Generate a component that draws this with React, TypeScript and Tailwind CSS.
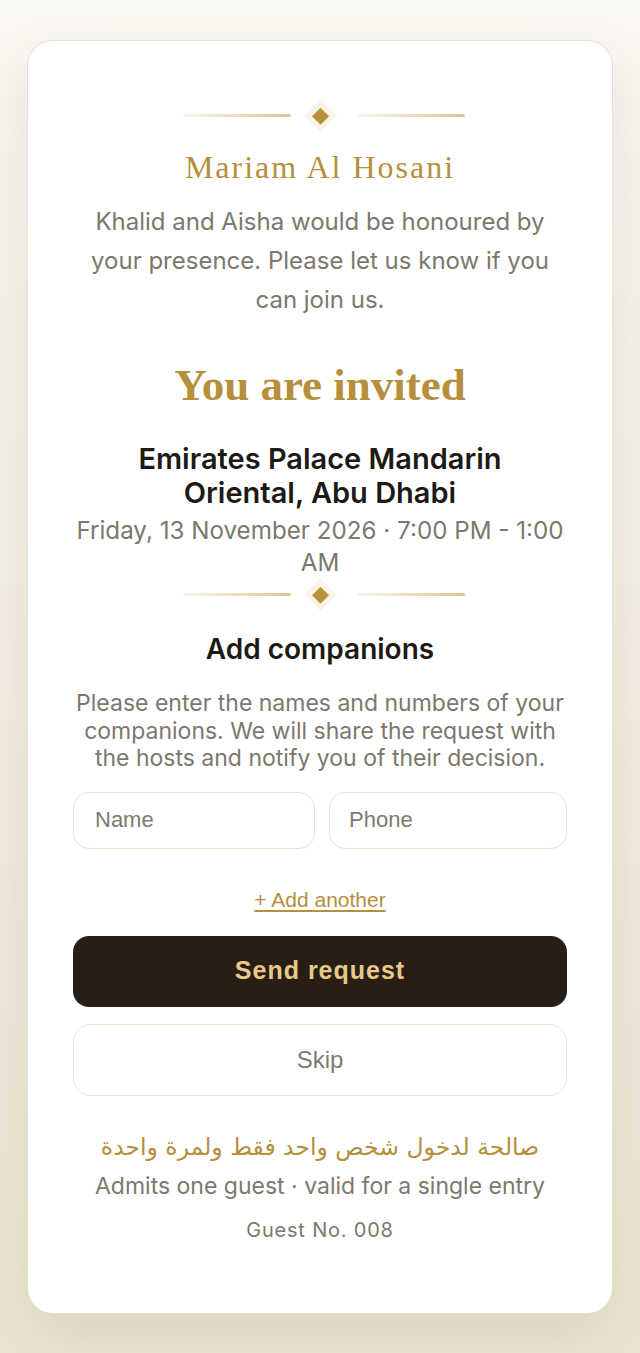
import { useState } from "react";

// Ornamental divider: two gold hairlines with a diamond in a soft halo
function Ornament() {
  return (
    <div className="flex items-center justify-center pl-[8px]">
      <div className="h-[3px] w-[108px] rounded-full bg-linear-to-r from-[#faf6ec] to-[#dcc48e]" />
      <div className="ml-[17px] mr-[25px] flex h-[30px] w-[24px] items-center justify-center">
        <div className="flex h-[23px] w-[23px] rotate-45 items-center justify-center bg-[#f8f4ea]">
          <div className="h-[12px] w-[12px] bg-[#b8913b]" />
        </div>
      </div>
      <div className="h-[3px] w-[108px] rounded-full bg-linear-to-r from-[#faf6ec] to-[#dcc48e]" />
    </div>
  );
}

type Companion = { name: string; phone: string };

export default function App() {
  const [companions, setCompanions] = useState<Companion[]>([
    { name: "", phone: "" },
  ]);

  const update = (i: number, key: keyof Companion, value: string) => {
    setCompanions((prev) =>
      prev.map((c, idx) => (idx === i ? { ...c, [key]: value } : c)),
    );
  };

  return (
    <div className="min-h-[1353px] bg-linear-to-b from-[#faf8f3] to-[#ece5d3] px-[27px] py-[40px] font-['Inter',sans-serif]">
      <main className="rounded-[26px] border border-[#e6e0cf] bg-white px-[45px] pt-[59px] pb-[70px] text-center shadow-[0_24px_60px_rgba(120,100,60,0.14)]">
        <Ornament />

        <h1 className="mt-[17px] font-['Liberation_Serif',serif] text-[32px] leading-[40px] tracking-[2px] text-[#b58f3c]">
          Mariam Al Hosani
        </h1>

        <p className="mt-[15px] text-[24px] leading-[39px] text-[#7b786d]">
          Khalid and Aisha would be honoured by your presence. Please let us
          know if you can join us.
        </p>

        <h2 className="mt-[38px] font-['Liberation_Serif',serif] text-[45px] leading-[56px] font-bold text-[#b58f3c]">
          You are invited
        </h2>

        <h3 className="mx-auto mt-[29px] max-w-[420px] text-[29px] leading-[34px] font-semibold text-[#1d1a15]">
          Emirates Palace Mandarin Oriental, Abu Dhabi
        </h3>
        <p className="mt-[5px] text-[24.2px] leading-[32px] text-[#7b786d]">
          Friday, 13 November 2026 · 7:00 PM - 1:00 AM
        </p>

        <Ornament />

        <h3 className="mt-[23px] text-[28px] leading-[34px] font-semibold text-[#1d1a15]">
          Add companions
        </h3>
        <p className="mt-[24px] text-[23px] leading-[27.5px] text-[#7b786d]">
          Please enter the names and numbers of your companions. We will share
          the request with the hosts and notify you of their decision.
        </p>

        <div className="mt-[19px] flex flex-col gap-[14px]">
          {companions.map((c, i) => (
            <div key={i} className="flex gap-[14px]">
              <input
                value={c.name}
                onChange={(e) => update(i, "name", e.target.value)}
                placeholder="Name"
                className="h-[57px] min-w-0 flex-1 rounded-[16px] border border-[#e8e3d3] bg-white px-[21px] font-['Liberation_Sans',sans-serif] text-[22px] text-[#2a241c] outline-none placeholder:text-[#7d7a70]"
              />
              <input
                value={c.phone}
                onChange={(e) => update(i, "phone", e.target.value)}
                placeholder="Phone"
                className="h-[57px] min-w-0 flex-1 rounded-[16px] border border-[#e8e3d3] bg-white px-[19px] font-['Liberation_Sans',sans-serif] text-[22px] text-[#2a241c] outline-none placeholder:text-[#7d7a70]"
              />
            </div>
          ))}
        </div>

        <button
          type="button"
          onClick={() => setCompanions((p) => [...p, { name: "", phone: "" }])}
          className="mt-[39px] font-['Liberation_Sans',sans-serif] text-[21px] leading-[24px] text-[#b58f3c] underline underline-offset-[3px]"
        >
          + Add another
        </button>

        <button
          type="button"
          className="mt-[23px] flex h-[71px] w-full items-center justify-center rounded-[16px] bg-[#281e16] font-['Liberation_Sans',sans-serif] text-[25px] font-bold tracking-[1px] text-[#e8c98a]"
        >
          Send request
        </button>
        <button
          type="button"
          className="mt-[17px] flex h-[72px] w-full items-center justify-center rounded-[18px] border border-[#e8e3d3] bg-white font-['Liberation_Sans',sans-serif] text-[24px] text-[#7d7a70]"
        >
          Skip
        </button>

        <p
          dir="rtl"
          className="mt-[34px] font-['DejaVu_Sans',sans-serif] text-[23.5px] leading-[34px] text-[#b58f3c]"
        >
          صالحة لدخول شخص واحد فقط ولمرة واحدة
        </p>
        <p className="mt-[6px] text-[23px] leading-[32px] text-[#7b786d]">
          Admits one guest · valid for a single entry
        </p>
        <p className="mt-[15px] text-[20px] leading-[26px] tracking-[0.8px] text-[#7b786d]">
          Guest No. 008
        </p>
      </main>
    </div>
  );
}
